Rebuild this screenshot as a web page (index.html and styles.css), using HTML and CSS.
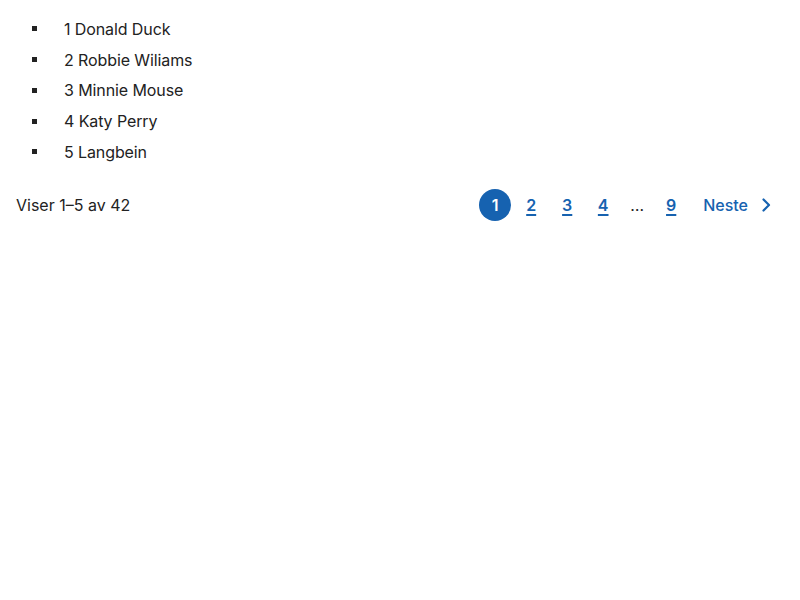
FILE: index.html
```html
<!DOCTYPE html>
<html lang="no">
<head>
<meta charset="utf-8">
<link rel="stylesheet" href="styles.css">
</head>
<body>
<div class="page">
  <ul class="list">
    <li class="item"><span class="dot"></span><span>1 Donald Duck</span></li>
    <li class="item"><span class="dot"></span><span>2 Robbie Wiliams</span></li>
    <li class="item"><span class="dot"></span><span>3 Minnie Mouse</span></li>
    <li class="item"><span class="dot"></span><span>4 Katy Perry</span></li>
    <li class="item"><span class="dot"></span><span>5 Langbein</span></li>
  </ul>
  <div class="bar">
    <span class="count">Viser 1–5 av 42</span>
    <nav class="pager">
      <span class="pg current">1</span>
      <a class="pg" href="#">2</a>
      <a class="pg" href="#">3</a>
      <a class="pg" href="#">4</a>
      <span class="ellipsis">…</span>
      <a class="pg" href="#">9</a>
      <a class="next" href="#">Neste
        <svg width="20" height="20" viewBox="0 0 20 20"><path d="M7.5 4.5 L13 10 L7.5 15.5" fill="none" stroke="currentColor" stroke-width="2.2" stroke-linecap="round" stroke-linejoin="round"/></svg>
      </a>
    </nav>
  </div>
</div>
</body>
</html>
```
FILE: styles.css
```css
html, body { margin: 0; padding: 0; background: #fff; }
body { font-family: Inter, "Noto Sans", sans-serif; font-size: 16px; color: #222; }
.page { padding: 13.6px 16px 0 16px; }
.list { list-style: none; margin: 0; padding: 0; }
.item { display: flex; align-items: center; height: 30.75px; line-height: 24px; letter-spacing: -0.1px; }
.dot { width: 5px; height: 5px; background: #222; margin-left: 16px; margin-right: 27px; }
.bar { display: flex; justify-content: space-between; align-items: center; margin-top: 21.4px; height: 32px; }
.count { line-height: 24px; }
.pager { display: flex; align-items: center; gap: 4px; }
.pg { width: 32px; height: 32px; display: flex; align-items: center; justify-content: center; color: #1662b0; font-weight: 600; text-decoration: underline; text-underline-offset: 3px; text-decoration-thickness: 2px; }
.pg.current { background: #1662b0; color: #fff; border-radius: 50%; text-decoration: none; }
.ellipsis { width: 28px; text-align: center; color: #222; }
.next { display: flex; align-items: center; gap: 8px; padding: 0 8px 0 12px; height: 32px; color: #1662b0; text-decoration: none; font-weight: 500; }
.next svg { display: block; }
```
